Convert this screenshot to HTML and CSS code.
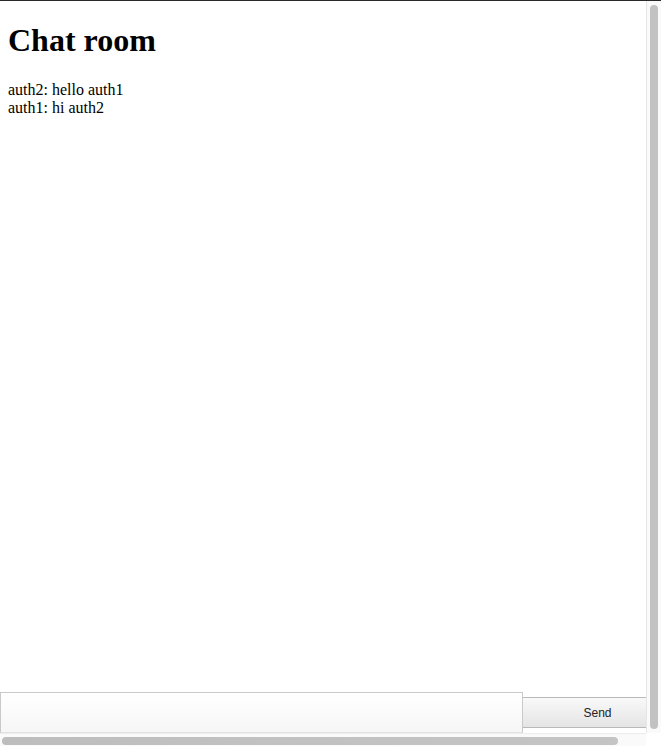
FILE: index.html
```html
<!DOCTYPE html>
<html>
<head>
<meta charset="utf-8">
<link rel="stylesheet" href="styles.css">
</head>
<body>
<div class="frame">
  <div class="view">
    <div class="content">
      <h1 class="title">Chat room</h1>
      <div class="log">
        <div>auth2: hello auth1</div>
        <div>auth1: hi auth2</div>
      </div>
    </div>
    <form class="composer">
      <textarea class="field"></textarea>
      <button type="button" class="send">Send</button>
    </form>
  </div>
  <div class="vbar"><div class="vthumb"></div></div>
  <div class="hbar"><div class="hthumb"></div></div>
  <div class="corner"></div>
</div>
</body>
</html>
```
FILE: styles.css
```css
html, body {
  margin: 0;
  padding: 0;
  background: #fff;
}
.frame {
  width: 661px;
  height: 746px;
  box-sizing: border-box;
  border-top: 1px solid #2a2a2a;
  display: grid;
  grid-template-columns: 646px 15px;
  grid-template-rows: 732px 13px;
  overflow: hidden;
}
.view {
  display: flex;
  flex-direction: column;
  justify-content: space-between;
  min-height: 0;
}
.content {
  padding: 0 8px;
  font-family: "Liberation Serif", "Times New Roman", serif;
  font-size: 16px;
  color: #000;
}
.title {
  font-size: 32px;
  font-weight: bold;
  margin: 21px 0 22px;
  line-height: 37px;
}
.log {
  line-height: 18px;
}
.composer {
  display: flex;
  align-items: center;
  margin: 0;
  height: 41px;
}
.field {
  width: 523px;
  height: 41px;
  box-sizing: border-box;
  margin: 0;
  border: 1px solid #c9c9c9;
  border-bottom-color: #e2e2e2;
  background: linear-gradient(#ffffff, #f6f6f6);
  resize: none;
  outline: none;
}
.send {
  flex: 1;
  height: 31px;
  margin: 0;
  border: 1px solid #b9b9b9;
  border-left: none;
  border-right: none;
  background: linear-gradient(#f9f9f9, #e4e4e4);
  font-family: "Liberation Sans", Arial, sans-serif;
  font-size: 12px;
  color: #222;
  padding: 0 0 0 26px;
}
.vbar {
  background: #fafafa;
  border-left: 1px solid #e6e6e6;
  padding: 4px 3px 4px 3px;
  grid-row: 1;
  grid-column: 2;
}
.vthumb {
  width: 8px;
  height: 100%;
  border-radius: 4px;
  background: #c2c2c2;
}
.hbar {
  grid-row: 2;
  grid-column: 1;
  background: #fafafa;
  border-top: 1px solid #ececec;
  padding: 3px 28px 1px 2px;
}
.hthumb {
  height: 8px;
  border-radius: 4px;
  background: linear-gradient(90deg, #bdbdbd, #c1c1c1 40%, #c4c4c4);
}
.corner {
  grid-row: 2;
  grid-column: 2;
  background: #fff;
}
```
